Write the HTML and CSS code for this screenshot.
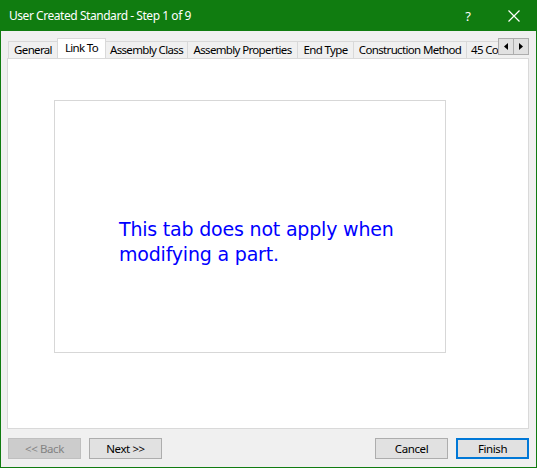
FILE: index.html
```html
<!DOCTYPE html>
<html>
<head>
<meta charset="utf-8">
<link rel="stylesheet" href="styles.css">
</head>
<body>
<div class="window">
  <div class="titlebar">
    <span class="title">User Created Standard - Step 1 of 9</span>
    <span class="help">?</span>
    <span class="close">
      <svg width="12" height="12" viewBox="0 0 12 12"><path d="M0.5 0.5 L11.5 11.5 M11.5 0.5 L0.5 11.5" stroke="#fff" stroke-width="1.2" fill="none"/></svg>
    </span>
  </div>
  <div class="body">
    <div class="tabstrip">
      <div class="tabs">
        <div class="tab t-general">General</div>
        <div class="tab active t-link">Link To</div>
        <div class="tab t-class">Assembly Class</div>
        <div class="tab t-props">Assembly Properties</div>
        <div class="tab t-end">End Type</div>
        <div class="tab t-cons">Construction Method</div>
        <div class="tab t-45">45 Co</div>
      </div>
      <div class="scroll">
        <div class="sbtn"><svg width="4" height="7" viewBox="0 0 4 7"><path d="M4 0 L0 3.5 L4 7 Z" fill="#000"/></svg></div>
        <div class="sbtn"><svg width="4" height="7" viewBox="0 0 4 7"><path d="M0 0 L4 3.5 L0 7 Z" fill="#000"/></svg></div>
      </div>
    </div>
    <div class="panel">
      <div class="inner">
        <p class="msg">This tab does not apply when<br>modifying a part.</p>
      </div>
    </div>
    <div class="buttons">
      <div class="left">
        <button class="btn disabled">&lt;&lt; Back</button>
        <button class="btn">Next &gt;&gt;</button>
      </div>
      <div class="right">
        <button class="btn">Cancel</button>
        <button class="btn default">Finish</button>
      </div>
    </div>
  </div>
</div>
</body>
</html>
```
FILE: styles.css
```css
html, body {
  margin: 0;
  padding: 0;
  background: #f0f0f0;
}
.window {
  width: 537px;
  height: 468px;
  box-sizing: border-box;
  border: 1px solid #107c10;
  border-top: none;
  display: flex;
  flex-direction: column;
  font-family: "Noto Sans", "Open Sans", sans-serif;
  font-size: 12px;
  color: #000;
  background: #f0f0f0;
}
.titlebar {
  height: 31px;
  background: #107c10;
  color: #fff;
  display: flex;
  align-items: center;
  margin: 0 -1px;
}
.title {
  padding-left: 9px;
  font-size: 12px;
  letter-spacing: -0.45px;
  flex: 1;
  margin-top: -1px;
}
.help {
  width: 46px;
  text-align: center;
  font-size: 13px;
}
.close {
  width: 46px;
  display: flex;
  justify-content: center;
  align-items: center;
}
.body {
  flex: 1;
  padding: 7px 7px 0 6px;
  display: flex;
  flex-direction: column;
}
.tabstrip {
  height: 20px;
  display: flex;
  align-items: flex-end;
  position: relative;
  z-index: 1;
}
.tabs {
  display: flex;
  align-items: flex-end;
  overflow: hidden;
  width: 490px;
  height: 21px;
  padding-left: 1px;
}
.tab {
  height: 17px;
  line-height: 16px;
  box-sizing: border-box;
  border: 1px solid #d9d9d9;
  border-bottom: none;
  background: #f0f0f0;
  text-align: center;
  flex: none;
  white-space: nowrap;
  margin-right: -1px;
  font-size: 11.5px;
  letter-spacing: -0.65px;
  overflow: hidden;
}
.tab.active {
  height: 21px;
  line-height: 18px;
  background: #fff;
  position: relative;
  z-index: 2;
  margin-bottom: -1px;
}
.t-general { width: 50px; }
.t-link { width: 49px; }
.t-class { width: 83px; }
.t-props { width: 111px; }
.t-end { width: 57px; }
.t-cons { width: 114px; }
.t-45 { width: 40px; text-align: left; padding-left: 4px; }
.scroll {
  display: flex;
  position: absolute;
  right: 0;
  top: 0;
  height: 17px;
}
.sbtn {
  width: 16px;
  height: 17px;
  box-sizing: border-box;
  border: 1px solid #adadad;
  background: #e1e1e1;
  display: flex;
  align-items: center;
  justify-content: center;
  margin-left: -1px;
}
.panel {
  height: 371px;
  box-sizing: border-box;
  border: 1px solid #d9d9d9;
  background: #fff;
  padding: 41px 82px 0 46px;
}
.inner {
  height: 253px;
  box-sizing: border-box;
  border: 1px solid #d7d7d7;
  display: flex;
  align-items: center;
}
.msg {
  margin: 30px 0 0 64px;
  color: #0000ff;
  font-family: "DejaVu Sans", sans-serif;
  font-size: 19px;
  line-height: 25px;
  letter-spacing: -0.2px;
}
.buttons {
  display: flex;
  justify-content: space-between;
  padding: 9px 0 0 1px;
}
.left, .right {
  display: flex;
  gap: 8px;
}
.btn {
  width: 73px;
  height: 21px;
  box-sizing: border-box;
  border: 1px solid #adadad;
  background: #e1e1e1;
  font-family: "Noto Sans", "Open Sans", sans-serif;
  font-size: 11.5px;
  letter-spacing: -0.4px;
  color: #000;
  padding: 0;
  margin: 0;
  line-height: 18px;
}
.btn.disabled {
  background: #cccccc;
  border-color: #bfbfbf;
  color: #838383;
}
.btn.default {
  border: 2px solid #0078d7;
}
```
